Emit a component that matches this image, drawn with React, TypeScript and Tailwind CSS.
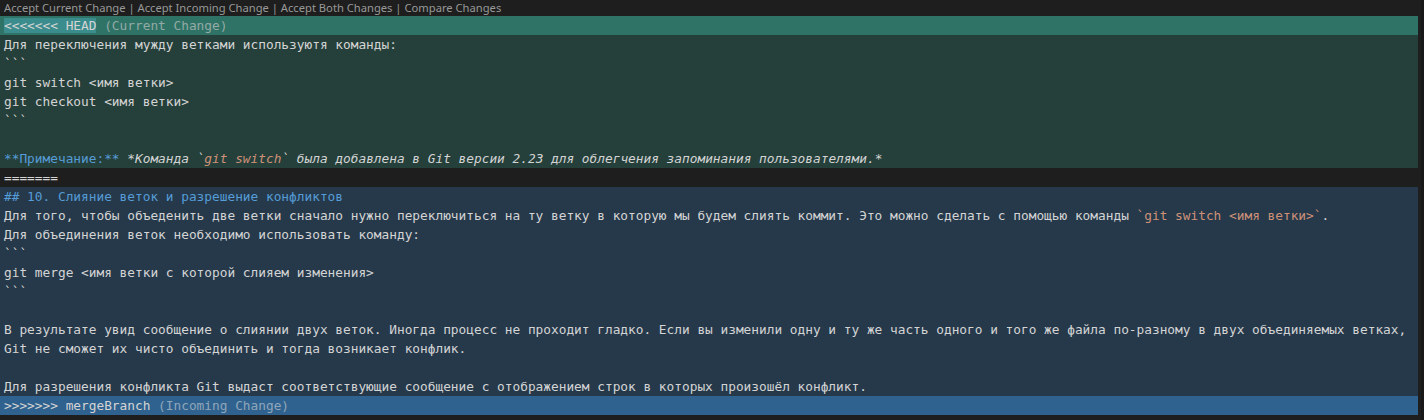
import React from "react";

const mono = { fontFamily: '"DejaVu Sans Mono", "Liberation Mono", monospace' };

function Line({ bg, children }: { bg: string; children?: React.ReactNode }) {
  return (
    <div className={`h-[19px] leading-[19px] whitespace-pre pl-[4px] text-[12.8px] text-[#d4d4d4] ${bg}`}>
      {children ?? " "}
    </div>
  );
}

export default function App() {
  const cur = "bg-[#25403b]";
  const inc = "bg-[#25394b]";
  return (
    <div className="w-[1424px] h-[420px] bg-[#1e1e1e] overflow-hidden flex">
      <div className="w-[1418px] flex flex-col">
        <div
          className="h-[16px] leading-[16px] pl-[4px] text-[11.2px] text-[#999999] whitespace-pre"
          style={{ fontFamily: '"Noto Sans", "Open Sans", sans-serif' }}
        >
          Accept Current Change | Accept Incoming Change | Accept Both Changes | Compare Changes
        </div>
        <div style={mono} className="flex flex-col">
          <Line bg="bg-[#2f7366]">
            <span className="bg-[#3b8c8c]">{"<<<<<<< HEAD"}</span>
            <span className="text-[#93aaa5]"> (Current Change)</span>
          </Line>
          <Line bg={cur}>Для переключения мужду ветками используютя команды:</Line>
          <Line bg={cur}>```</Line>
          <Line bg={cur}>{"git switch <имя ветки>"}</Line>
          <Line bg={cur}>{"git checkout <имя ветки>"}</Line>
          <Line bg={cur}>```</Line>
          <Line bg={cur} />
          <Line bg={cur}>
            <span className="text-[#569cd6]">**Примечание:**</span>{" "}
            <span className="italic">
              *Команда `<span className="text-[#ce9178]">git switch</span>` была добавлена в Git версии 2.23 для облегчения запоминания пользователями.*
            </span>
          </Line>
          <Line bg="bg-[#1e1e1e]">=======</Line>
          <Line bg={inc}>
            <span className="text-[#569cd6]">## 10. Слияние веток и разрешение конфликтов</span>
          </Line>
          <Line bg={inc}>
            Для того, чтобы объеденить две ветки сначало нужно переключиться на ту ветку в которую мы будем слиять коммит. Это можно сделать с помощью команды{" "}
            <span className="text-[#ce9178]">{"`git switch <имя ветки>`"}</span>.
          </Line>
          <Line bg={inc}>Для объединения веток необходимо использовать команду:</Line>
          <Line bg={inc}>```</Line>
          <Line bg={inc}>{"git merge <имя ветки с которой слияем изменения>"}</Line>
          <Line bg={inc}>```</Line>
          <Line bg={inc} />
          <Line bg={inc}>
            В результате увид сообщение о слиянии двух веток. Иногда процесс не проходит гладко. Если вы изменили одну и ту же часть одного и того же файла по-разному в двух объединяемых ветках,
          </Line>
          <Line bg={inc}>Git не сможет их чисто объединить и тогда возникает конфлик.</Line>
          <Line bg={inc} />
          <Line bg={inc}>
            Для разрешения конфликта Git выдаст соответствующие сообщение с отображением строк в которых произошёл конфликт.
          </Line>
          <Line bg="bg-[#2f628e]">
            {">>>>>>> mergeBranch"}
            <span className="text-[#8fa6bb]"> (Incoming Change)</span>
          </Line>
        </div>
      </div>
      <div className="w-[3px] bg-[#1e1e1e]" />
      <div className="w-[3px] bg-[#181818]" />
    </div>
  );
}
